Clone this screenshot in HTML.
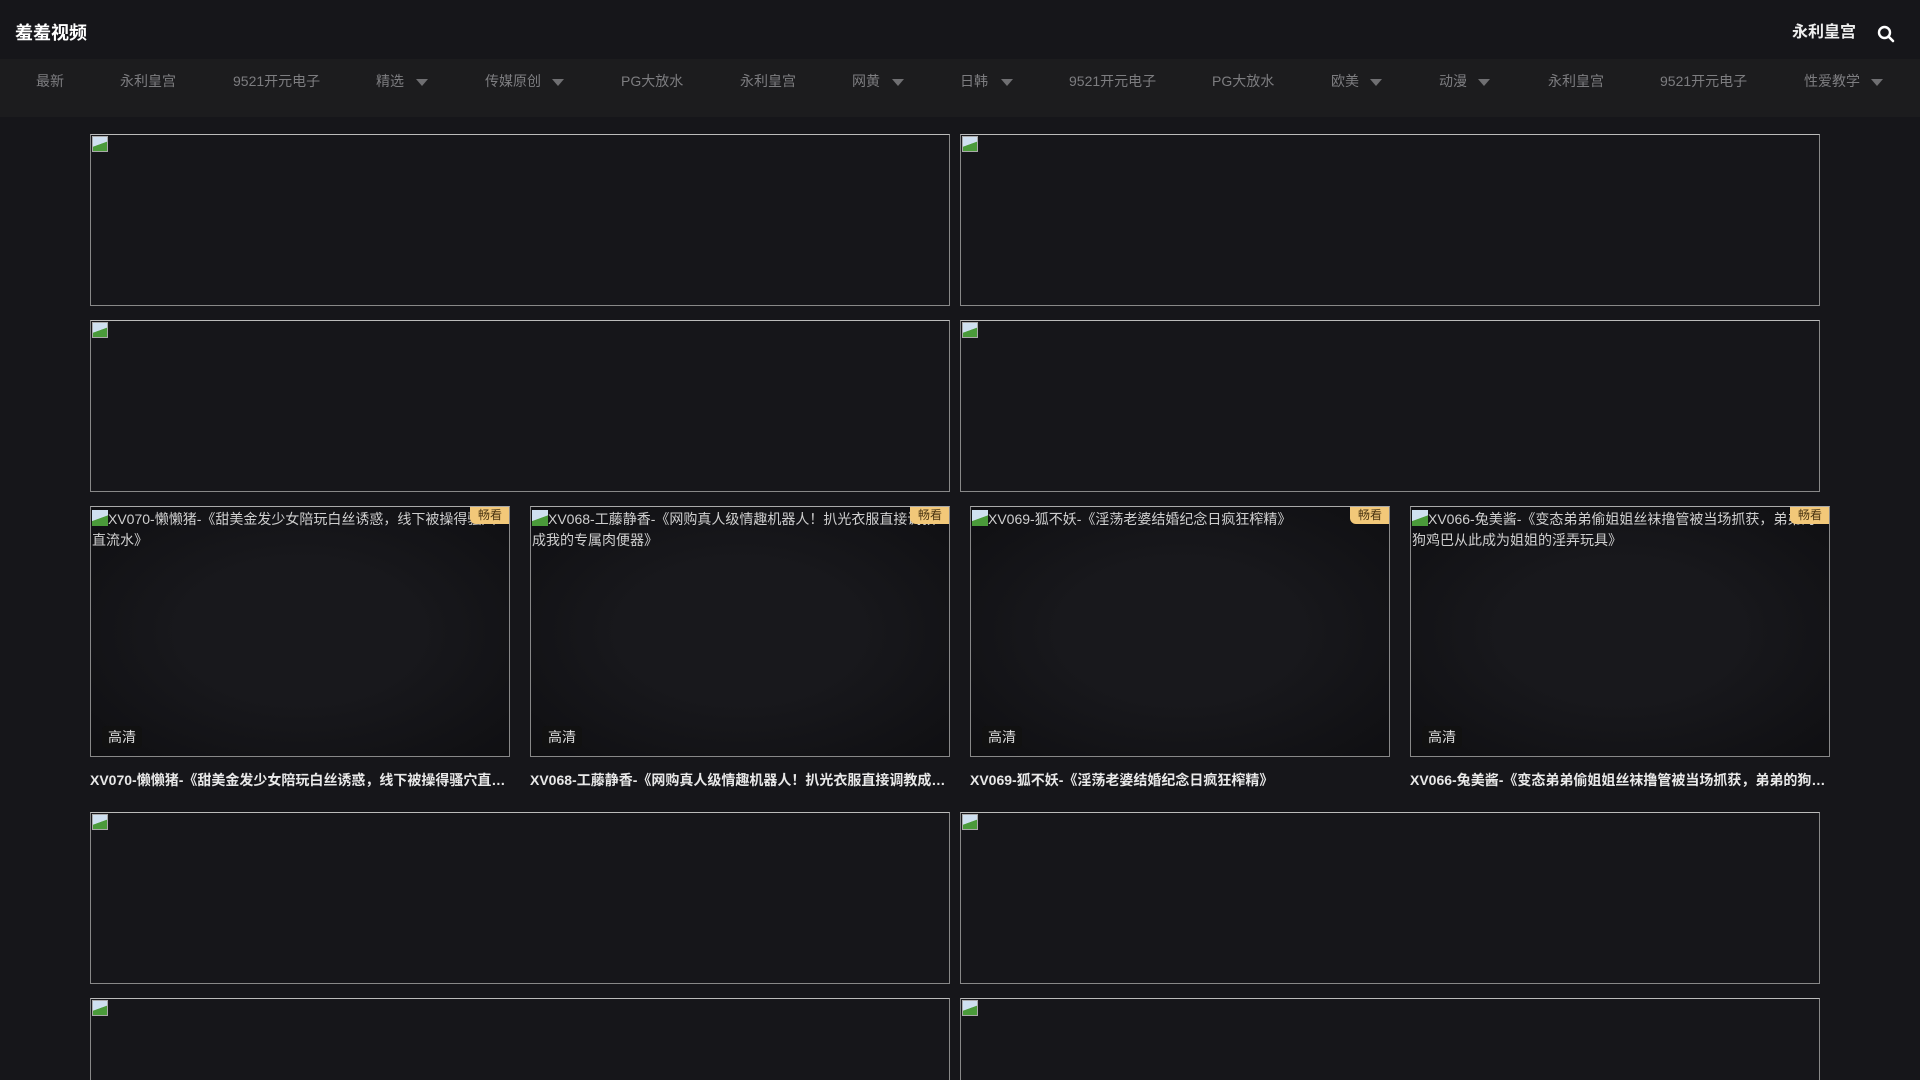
<!DOCTYPE html>
<html><head><meta charset="utf-8"><style>
*{margin:0;padding:0;box-sizing:border-box}
html{width:1920px;height:1080px;overflow:hidden}
body{width:1920px;height:1080px;overflow:hidden;background:#16161a;font-family:"Liberation Sans","Noto Sans CJK SC",sans-serif;position:relative}
.hdr{position:absolute;left:0;top:0;width:1920px;height:59px;background:#16161a}
.logo{position:absolute;left:15px;top:22px;font-size:18px;font-weight:bold;color:#fff;line-height:22px}
.hr{position:absolute;left:1792px;top:23px;font-size:16px;font-weight:bold;color:#eee;line-height:20px}
.nav{position:absolute;left:0;top:59px;width:1920px;height:58px;background:#1c1c1e}
.nav span{position:absolute;top:14px;font-size:14px;color:#7d7d80;line-height:17px;white-space:nowrap}
.nav i{position:absolute;top:20px;width:0;height:0;border-left:6px solid transparent;border-right:6px solid transparent;border-top:7px solid #6f6f72}
.ban{position:absolute;width:860px;height:172px;border:1px solid #888;border-top-color:#bbb;background:#16161a}
.bi{position:absolute;left:1px;top:1px;width:16px;height:16px;background:linear-gradient(160deg,#cfe0f0 50%,#4a9a3a 52%);border:1px solid #aaa}
.card{position:absolute;top:506px;width:420px}
.img{position:relative;height:251px;border:1px solid #888;border-top-color:#aaa;background:radial-gradient(ellipse at center,#18181c 40%,#0f0f12 100%);overflow:hidden}
.alt{position:absolute;left:1px;top:2px;right:1px;font-size:14px;color:#cfcfcf;line-height:21px}
.alt b{display:inline-block;width:16px;height:16px;vertical-align:-2px;background:linear-gradient(160deg,#cfe0f0 50%,#4a9a3a 52%)}
.bd{position:absolute;right:-1px;top:-1px;background:#f2c879;color:#4a3512;font-size:12px;line-height:18px;padding:0 8px;border-radius:0 0 0 6px}
.hq{position:absolute;left:11px;bottom:8px;background:#111;color:#ddd;font-size:14px;line-height:22px;padding:0 6px;border-radius:4px}
.t{margin-top:14px;font-size:14px;font-weight:bold;color:#e8e8e8;white-space:nowrap;overflow:hidden;text-overflow:ellipsis;line-height:18px}
</style></head><body>
<div class="hdr"><div class="logo">羞羞视频</div><div class="hr">永利皇宫</div>
<svg style="position:absolute;left:1877px;top:25px" width="18" height="18" viewBox="0 0 18 18"><circle cx="7.5" cy="7.5" r="5.5" fill="none" stroke="#fff" stroke-width="2.4"/><line x1="11.5" y1="11.5" x2="16" y2="16" stroke="#fff" stroke-width="2.6" stroke-linecap="round"/></svg></div>
<div class="nav">
<span style="left:36px">最新</span><span style="left:120px">永利皇宫</span><span style="left:233px">9521开元电子</span>
<span style="left:376px">精选</span><i style="left:416px"></i>
<span style="left:485px">传媒原创</span><i style="left:552px"></i>
<span style="left:621px">PG大放水</span><span style="left:740px">永利皇宫</span>
<span style="left:852px">网黄</span><i style="left:892px"></i>
<span style="left:960px">日韩</span><i style="left:1001px"></i>
<span style="left:1069px">9521开元电子</span><span style="left:1212px">PG大放水</span>
<span style="left:1331px">欧美</span><i style="left:1370px"></i>
<span style="left:1439px">动漫</span><i style="left:1478px"></i>
<span style="left:1548px">永利皇宫</span><span style="left:1660px">9521开元电子</span>
<span style="left:1804px">性爱教学</span><i style="left:1871px"></i>
</div>
<div class="ban" style="left:90px;top:134px"><div class="bi"></div></div>
<div class="ban" style="left:960px;top:134px"><div class="bi"></div></div>
<div class="ban" style="left:90px;top:320px"><div class="bi"></div></div>
<div class="ban" style="left:960px;top:320px"><div class="bi"></div></div>
<div class="card" style="left:90px"><div class="img"><div class="alt"><b></b>XV070-懒懒猪-《甜美金发少女陪玩白丝诱惑，线下被操得骚穴直流水》</div><div class="bd">畅看</div><div class="hq">高清</div></div><div class="t">XV070-懒懒猪-《甜美金发少女陪玩白丝诱惑，线下被操得骚穴直流水》</div></div>
<div class="card" style="left:530px"><div class="img"><div class="alt"><b></b>XV068-工藤静香-《网购真人级情趣机器人！扒光衣服直接调教成我的专属肉便器》</div><div class="bd">畅看</div><div class="hq">高清</div></div><div class="t">XV068-工藤静香-《网购真人级情趣机器人！扒光衣服直接调教成我的专属肉便器》</div></div>
<div class="card" style="left:970px"><div class="img"><div class="alt"><b></b>XV069-狐不妖-《淫荡老婆结婚纪念日疯狂榨精》</div><div class="bd">畅看</div><div class="hq">高清</div></div><div class="t">XV069-狐不妖-《淫荡老婆结婚纪念日疯狂榨精》</div></div>
<div class="card" style="left:1410px"><div class="img"><div class="alt"><b></b>XV066-兔美酱-《变态弟弟偷姐姐丝袜撸管被当场抓获，弟弟的狗鸡巴从此成为姐姐的淫弄玩具》</div><div class="bd">畅看</div><div class="hq">高清</div></div><div class="t">XV066-兔美酱-《变态弟弟偷姐姐丝袜撸管被当场抓获，弟弟的狗鸡巴从此成为姐姐的淫弄玩具》</div></div>
<div class="ban" style="left:90px;top:812px"><div class="bi"></div></div>
<div class="ban" style="left:960px;top:812px"><div class="bi"></div></div>
<div class="ban" style="left:90px;top:998px;height:82px;border-bottom:none"><div class="bi"></div></div>
<div class="ban" style="left:960px;top:998px;height:82px;border-bottom:none"><div class="bi"></div></div>
</body></html>
